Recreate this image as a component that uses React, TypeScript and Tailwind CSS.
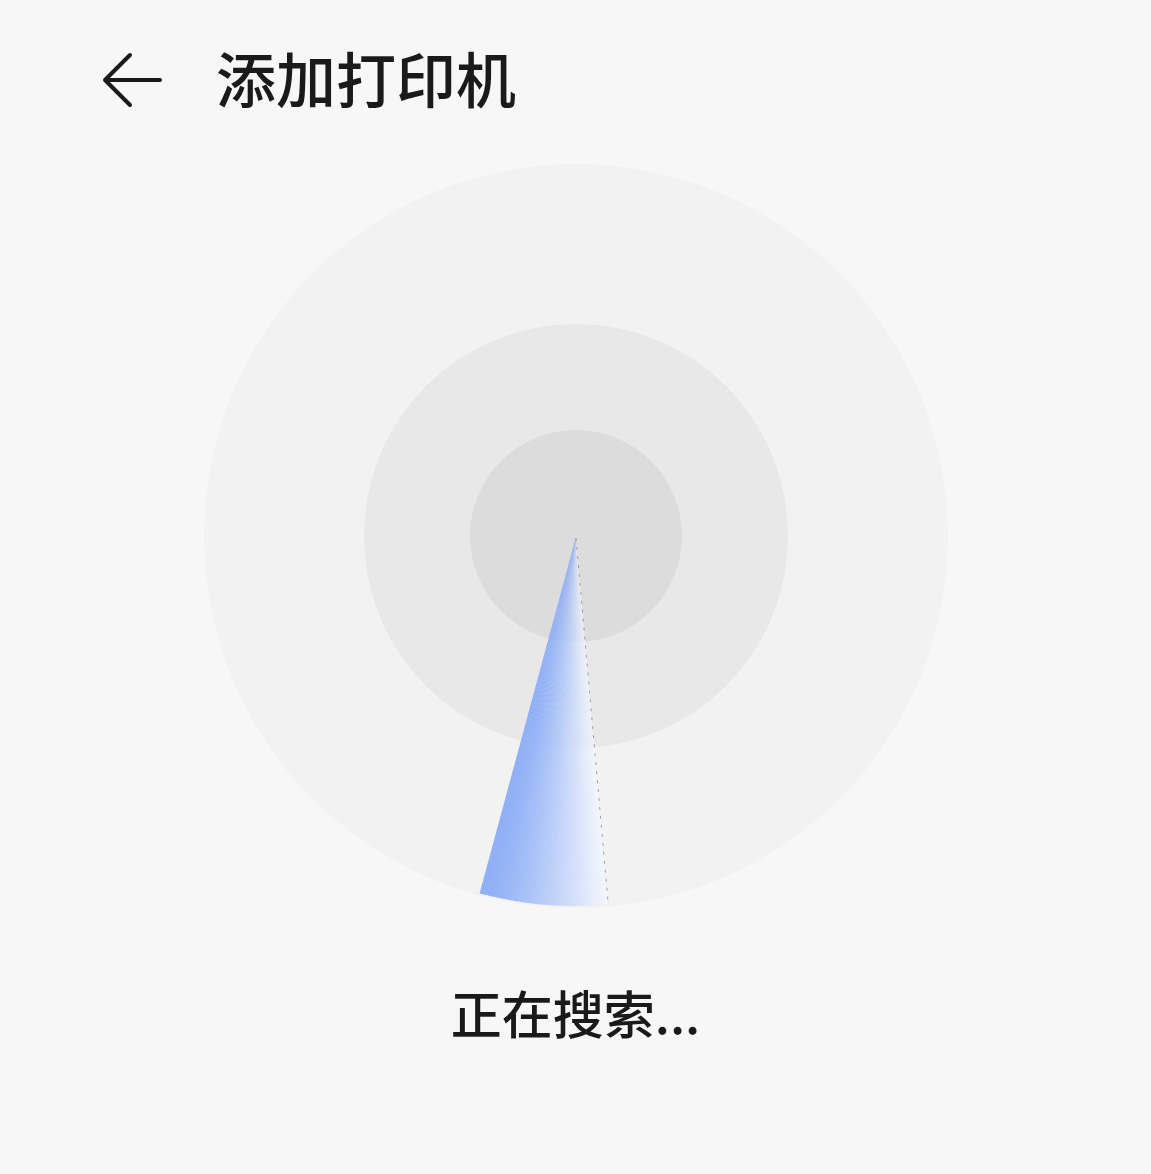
const CX = 372;
const CY = 372;
const R = 370;

// sweep from 15deg left of straight down to 5deg right of it
const START = 15.1;
const END = -5;
const SLICES = 60;

const lerp = (a: number, b: number, t: number) => a + (b - a) * t;

const point = (deg: number, r: number) => {
	const rad = (deg * Math.PI) / 180;
	return [CX - r * Math.sin(rad), CY + r * Math.cos(rad)];
};

const Radar = () => {
	const slices = [];
	for (let i = 0; i < SLICES; i++) {
		const a0 = lerp(START, END, i / SLICES);
		const a1 = lerp(START, END, (i + 1.4) / SLICES);
		// blue holds longer on the leading edge, fades out toward the dotted line
		const t = Math.pow(i / (SLICES - 1), 1.5);
		const [x0, y0] = point(a0, R);
		const [x1, y1] = point(Math.max(a1, END), R);
		const r = Math.round(lerp(138, 244, t));
		const g = Math.round(lerp(172, 247, t));
		const b = Math.round(lerp(246, 255, t));
		const o = lerp(0.92, 0.6, t);
		slices.push(
			<path
				key={i}
				d={`M${CX} ${CY + 1} L${x0} ${y0} A${R} ${R} 0 0 0 ${x1} ${y1} Z`}
				fill={`rgba(${r},${g},${b},${o})`}
			/>,
		);
	}
	const [ex, ey] = point(END, R);

	return (
		<svg width="744" height="744" viewBox="0 0 744 744" className="block">
			<circle cx={CX} cy={CY} r="372" fill="#f2f2f2" />
			<circle cx={CX} cy={CY} r="212" fill="#e8e8e8" />
			<circle cx={CX} cy={CY} r="106" fill="#dcdcdc" />
			{slices}
			<line
				x1={CX}
				y1={CY + 2}
				x2={ex}
				y2={ey}
				stroke="#8a8a8a"
				strokeWidth="0.8"
				strokeDasharray="3 6"
			/>
		</svg>
	);
};

export default function App() {
	return (
		<div
			className="w-full min-h-[1174px] bg-[#f7f7f7] text-[#1a1a1a] flex flex-col"
			style={{ fontFamily: '"Noto Sans CJK SC", "Noto Sans", sans-serif' }}
		>
			<header className="flex items-start h-[164px] pt-[47px] pl-[102px]">
				<button className="w-[60px] h-[60px] mt-[3px] flex items-center justify-center">
					<svg width="60" height="60" viewBox="0 0 60 60" fill="none">
						<path
							d="M58 30H4M28 5L3 30L28 55"
							stroke="#1a1a1a"
							strokeWidth="4"
							strokeLinecap="round"
							strokeLinejoin="round"
						/>
					</svg>
				</button>
				<h1 className="ml-[54px] text-[60px] leading-none font-medium">
					添加打印机
				</h1>
			</header>

			<div className="flex justify-center">
				<Radar />
			</div>

			<p className="mt-[79px] text-center text-[51px] leading-none font-medium">
				正在搜索...
			</p>
		</div>
	);
}
